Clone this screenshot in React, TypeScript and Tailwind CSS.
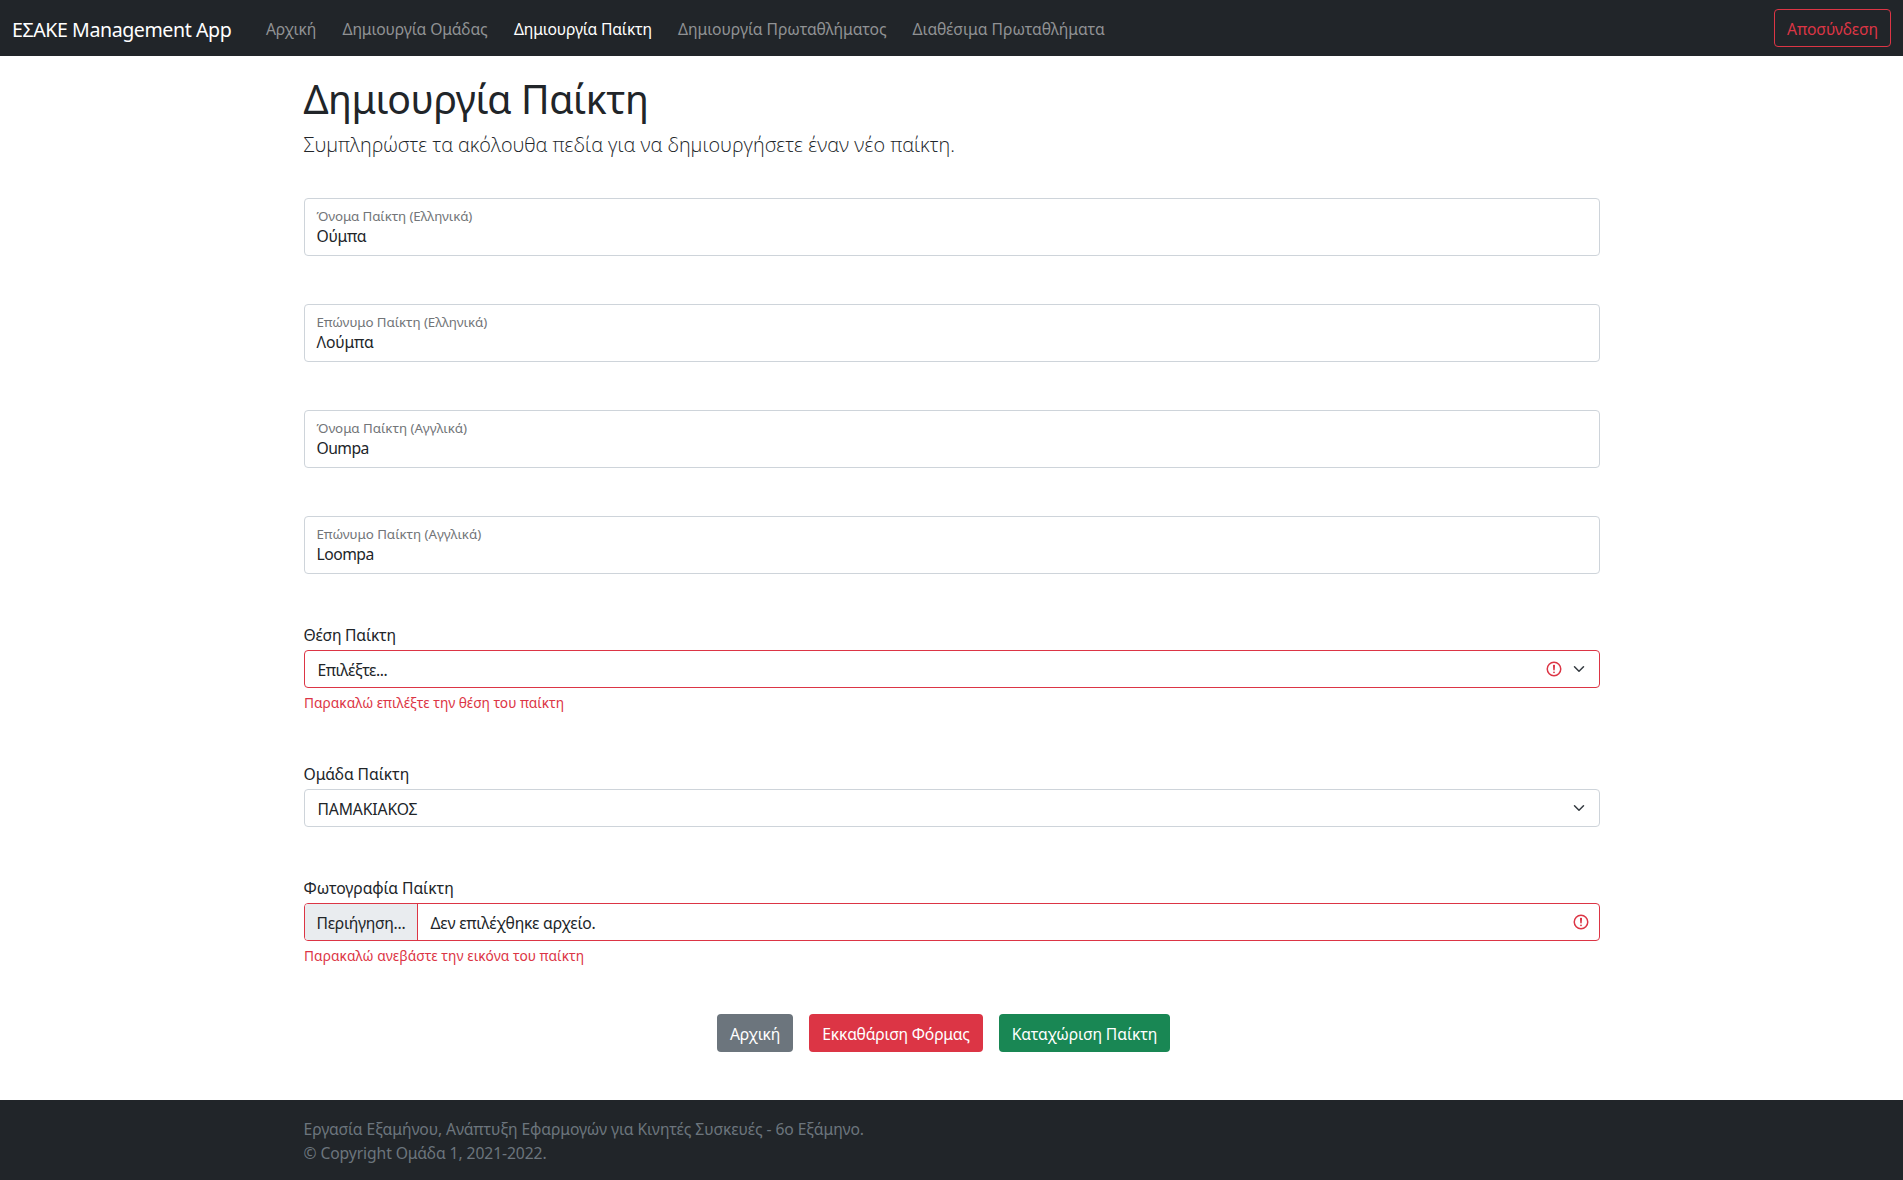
import React from 'react';

const navLinks = [
  { text: 'Αρχική', cls: 'w-[50px] mr-[26.5px] tracking-[-0.28px] text-[#909294]' },
  { text: 'Δημιουργία Ομάδας', cls: 'w-[145px] mr-[26.5px] tracking-[-0.13px] text-[#909294]' },
  { text: 'Δημιουργία Παίκτη', cls: 'w-[138px] mr-[26px] tracking-[-0.19px] text-white' },
  { text: 'Δημιουργία Πρωταθλήματος', cls: 'w-[209px] mr-[25.5px] tracking-[-0.05px] text-[#909294]' },
  { text: 'Διαθέσιμα Πρωταθλήματα', cls: 'tracking-[-0.02px] text-[#909294]' },
];

const fields = [
  { label: 'Όνομα Παίκτη (Ελληνικά)', value: 'Ούμπα', lt: 'tracking-[-0.125px]', vt: 'tracking-[-0.3px]' },
  { label: 'Επώνυμο Παίκτη (Ελληνικά)', value: 'Λούμπα', lt: 'tracking-[-0.09px]', vt: 'tracking-[-0.12px]' },
  { label: 'Όνομα Παίκτη (Αγγλικά)', value: 'Oumpa', lt: 'tracking-[-0.045px]', vt: 'tracking-[-0.55px]' },
  { label: 'Επώνυμο Παίκτη (Αγγλικά)', value: 'Loompa', lt: 'tracking-[-0.045px]', vt: 'tracking-[-0.5px]' },
];

function InvalidIcon() {
  return (
    <svg className="size-[18px] shrink-0" viewBox="0 0 12 12" fill="none" stroke="#dc3545">
      <circle cx="6" cy="6" r="4.5" />
      <path strokeLinejoin="round" d="M5.8 3.6h.4L6 6.5z" />
      <circle cx="6" cy="8.2" r=".6" fill="#dc3545" stroke="none" />
    </svg>
  );
}

function Chevron() {
  return (
    <svg className="h-3 w-4 shrink-0" viewBox="0 0 16 16" fill="none" stroke="#343a40" strokeWidth="2" strokeLinecap="round" strokeLinejoin="round">
      <path d="M2 5l6 6 6-6" />
    </svg>
  );
}

export default function App() {
  return (
    <div className="flex h-[1180px] flex-col bg-white font-['Noto_Sans',sans-serif] text-[15.7px] leading-6 whitespace-nowrap text-[#212529]">
      <nav className="flex h-14 items-center bg-[#212529] pl-3 pr-3">
        <a className="mt-1 w-[254px] text-[19.6px] leading-[30px] tracking-[-0.436px] text-white">ΕΣΑΚΕ Management App</a>
        <div className="mt-[2px] flex flex-1">
          {navLinks.map((l) => (
            <a key={l.text} className={l.cls}>{l.text}</a>
          ))}
        </div>
        <button className="h-[38px] w-[117px] rounded border border-[#dc3545] pt-[2px] text-center tracking-[-0.1px] text-[#dc3545]">Αποσύνδεση</button>
      </nav>

      <main className="mx-auto flex w-[1296px] flex-1 flex-col">
        <h1 className="mt-[19px] text-[39.2px] leading-[48px] font-normal tracking-[-0.46px]">Δημιουργία Παίκτη</h1>
        <p className="mt-[7px] font-['Open_Sans',sans-serif] text-[19.8px] leading-[30px] font-light tracking-[0.01px]">
          Συμπληρώστε τα ακόλουθα πεδία για να δημιουργήσετε έναν νέο παίκτη.
        </p>

        <div className="mt-[38px] flex flex-col gap-12">
          {fields.map((f) => (
            <div key={f.label} className="h-[58px] rounded border border-[#ced4da] px-3 pt-[9px]">
              <div className={`text-[13.35px] leading-[17px] text-[#727578] ${f.lt}`}>{f.label}</div>
              <div className={`-mt-px ${f.vt}`}>{f.value}</div>
            </div>
          ))}
        </div>

        <label className="mt-[49px] tracking-[-0.22px]">Θέση Παίκτη</label>
        <div className="mt-[3px] flex h-[38px] items-center gap-2 rounded border border-[#dc3545] px-3">
          <span className="mt-[2px] flex-1 pl-px tracking-[-0.45px]">Επιλέξτε...</span>
          <InvalidIcon />
          <Chevron />
        </div>
        <p className="mt-1 pl-[0.5px] text-[13.74px] leading-[21px] tracking-[-0.02px] text-[#dc3545]">Παρακαλώ επιλέξτε την θέση του παίκτη</p>

        <label className="mt-[49px] tracking-[-0.09px]">Ομάδα Παίκτη</label>
        <div className="mt-[3px] flex h-[38px] items-center rounded border border-[#ced4da] px-3">
          <span className="mt-[2px] flex-1 pl-px tracking-[-0.13px]">ΠΑΜΑΚΙΑΚΟΣ</span>
          <Chevron />
        </div>

        <label className="mt-[49px] tracking-[-0.08px]">Φωτογραφία Παίκτη</label>
        <div className="mt-[3px] flex h-[38px] items-center overflow-hidden rounded border border-[#dc3545] pr-[9px]">
          <span className="h-full w-[113px] border-r border-[#dc3545] bg-[#e9ecef] pt-[7px] pl-3 tracking-[-0.29px]">Περιήγηση...</span>
          <span className="mt-[2px] flex-1 pl-[13px] tracking-[-0.22px]">Δεν επιλέχθηκε αρχείο.</span>
          <InvalidIcon />
        </div>
        <p className="mt-1 pl-[0.5px] text-[13.74px] leading-[21px] tracking-[0.04px] text-[#dc3545]">Παρακαλώ ανεβάστε την εικόνα του παίκτη</p>

        <div className="mt-12 flex justify-center text-center text-white">
          <button className="mr-4 h-[38px] w-[76px] rounded bg-[#6c757d] pt-[2px] tracking-[-0.28px]">Αρχική</button>
          <button className="mr-4 h-[38px] w-[174px] rounded bg-[#dc3545] pt-[2px] tracking-[-0.2px]">Εκκαθάριση Φόρμας</button>
          <button className="mr-4 h-[38px] w-[171px] rounded bg-[#198754] pt-[2px] tracking-[-0.1px]">Καταχώριση Παίκτη</button>
        </div>
      </main>

      <footer className="h-20 bg-[#212529] pt-[17px] text-[#6c757d]">
        <div className="mx-auto w-[1296px]">
          <p className="tracking-[-0.09px]">Εργασία Εξαμήνου, Ανάπτυξη Εφαρμογών για Κινητές Συσκευές - 6ο Εξάμηνο.</p>
          <p className="tracking-[-0.11px]">© Copyright Ομάδα 1, 2021-2022.</p>
        </div>
      </footer>
    </div>
  );
}
